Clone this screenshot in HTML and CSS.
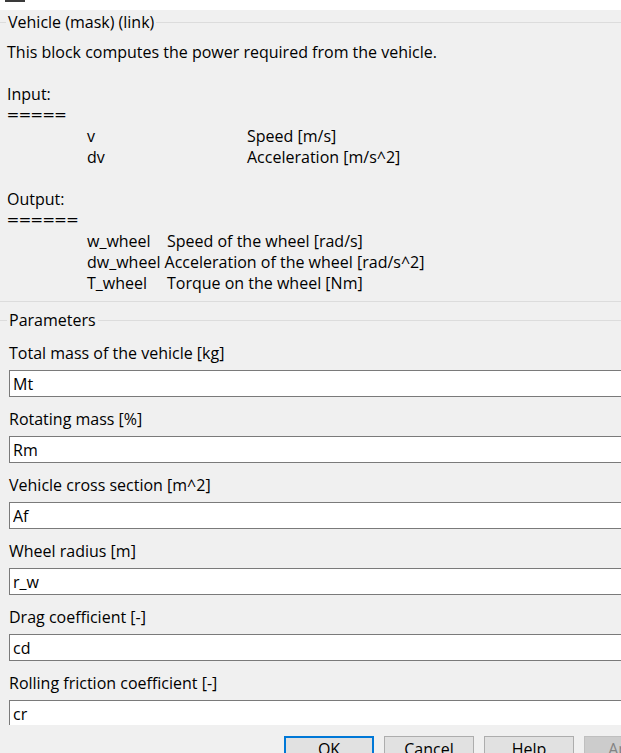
FILE: index.html
```html
<!DOCTYPE html>
<html lang="en">
<head>
<meta charset="utf-8">
<title>Block Parameters: Vehicle</title>
<link rel="stylesheet" href="styles.css">
</head>
<body>
<div class="dialog">
  <div class="topstrip"><span class="topmark"></span></div>
  <div class="scroll">
    <section class="group group-desc">
      <div class="group-title"><span>Vehicle (mask) (link)</span></div>
<pre class="desc">
This block computes the power required from the vehicle.

Input:
<span class="rule">=====</span>
&#9;v&#9;&#9;Speed [m/s]
&#9;dv&#9;&#9;Acceleration [m/s^2]

Output:
<span class="rule">======</span>
&#9;w_wheel&#9;Speed of the wheel [rad/s]
&#9;dw_wheel Acceleration of the wheel [rad/s^2]
&#9;T_wheel&#9;Torque on the wheel [Nm]</pre>
    </section>
    <section class="group group-params">
      <div class="group-title"><span>Parameters</span></div>
      <div class="params">
        <div class="param"><label for="p1">Total mass of the vehicle [kg]</label><input id="p1" class="field" type="text" value="Mt"></div>
        <div class="param"><label for="p2">Rotating mass [%]</label><input id="p2" class="field" type="text" value="Rm"></div>
        <div class="param"><label for="p3">Vehicle cross section [m^2]</label><input id="p3" class="field" type="text" value="Af"></div>
        <div class="param"><label for="p4">Wheel radius [m]</label><input id="p4" class="field" type="text" value="r_w"></div>
        <div class="param"><label for="p5">Drag coefficient [-]</label><input id="p5" class="field" type="text" value="cd"></div>
        <div class="param"><label for="p6">Rolling friction coefficient [-]</label><input id="p6" class="field" type="text" value="cr"></div>
      </div>
    </section>
  </div>
  <div class="buttons">
    <button class="btn btn-default" type="button">OK</button>
    <button class="btn" type="button">Cancel</button>
    <button class="btn" type="button">Help</button>
    <button class="btn" type="button" disabled>Apply</button>
  </div>
</div>
</body>
</html>
```
FILE: styles.css
```css
html, body {
  margin: 0;
  padding: 0;
}
body {
  background: #f0f0f0;
  overflow: hidden;
  font-family: "Open Sans", "Liberation Sans", Arial, sans-serif;
  font-size: 16px;
  color: #000;
}
.dialog {
  width: 684px;
}
.topstrip {
  height: 10px;
  background: #fff;
}
.topmark {
  display: block;
  margin-left: 5px;
  width: 20px;
  height: 2px;
  background: #3a3a3a;
}
.scroll {
  height: 715px;
  overflow: hidden;
}
.group-title {
  display: flex;
  align-items: center;
  height: 21px;
  line-height: 21px;
}
.group-title::before {
  content: "";
  width: 6px;
  border-top: 1px solid #dcdcdc;
}
.group-title::after {
  content: "";
  flex: 1;
  border-top: 1px solid #dcdcdc;
}
.group-title span {
  padding: 0 2px;
}
.group-desc {
  padding-top: 2px;
  padding-bottom: 7px;
  border-bottom: 1px solid #dcdcdc;
}
.desc {
  margin: 9px 0 0 7px;
  font: inherit;
  line-height: 21px;
  white-space: pre;
  tab-size: 80px;
  -moz-tab-size: 80px;
}
.rule {
  display: inline-block;
  transform: scaleX(1.3);
  transform-origin: left center;
}
.group-params .group-title {
  margin-top: 8px;
}
.group-params .group-title::before {
  width: 7px;
}
.params {
  display: flex;
  flex-direction: column;
  gap: 12px;
  padding: 12px 9px 0 9px;
}
.param {
  display: flex;
  flex-direction: column;
  gap: 6px;
}
.param label {
  line-height: 21px;
}
.field {
  display: block;
  box-sizing: border-box;
  width: 100%;
  height: 27px;
  margin: 0;
  padding: 0 3px;
  border: 1px solid #7a7a7a;
  border-radius: 0;
  background: #fff;
  font: inherit;
  color: #000;
  outline: none;
}
.buttons {
  display: flex;
  justify-content: flex-end;
  gap: 10px;
  padding: 11px 10px 0 0;
}
.btn {
  width: 90px;
  height: 26px;
  box-sizing: border-box;
  margin: 0;
  padding: 0;
  border: 1px solid #adadad;
  border-radius: 0;
  background: #e1e1e1;
  font: inherit;
  line-height: 20px;
  color: #000;
}
.btn-default {
  border: 2px solid #0078d7;
}
.btn:disabled {
  background: #cccccc;
  border-color: #bfbfbf;
  color: #838383;
}
```
